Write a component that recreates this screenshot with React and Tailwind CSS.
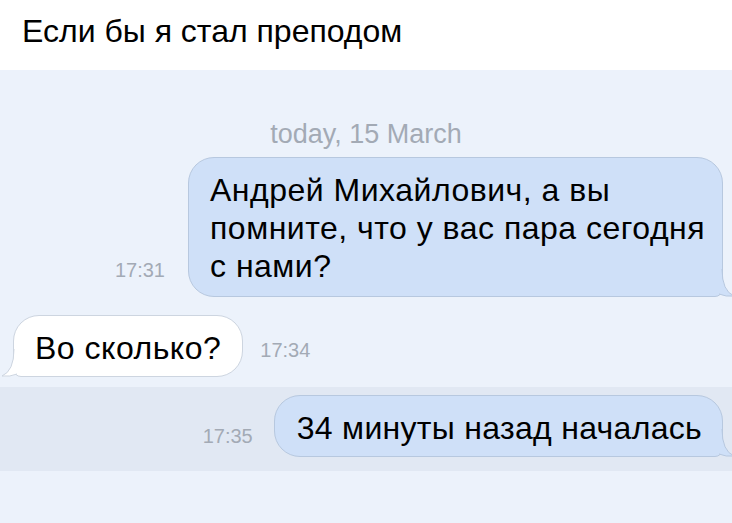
import React from "react";

const font = { fontFamily: '"Liberation Sans", Arial, sans-serif' };

// bubble tail, bottom-right (outgoing)
function TailRight() {
  return (
    <svg
      className="absolute right-[-13px] bottom-[-1px]"
      width="16"
      height="28"
      viewBox="0 0 16 28"
    >
      <path d="M0 0 L3 0 Q3 22 15 27 Q7 28 0 25 Z" fill="#cfe0f8" />
      <path d="M3 0 Q3 22 15 27 Q7 28 0 25" fill="none" stroke="#b7c8df" strokeWidth="1" />
    </svg>
  );
}

// bubble tail, bottom-left (incoming)
function TailLeft() {
  return (
    <svg
      className="absolute left-[-13px] bottom-[-1px]"
      width="16"
      height="28"
      viewBox="0 0 16 28"
    >
      <path d="M16 0 L13 0 Q13 22 1 27 Q9 28 16 25 Z" fill="#ffffff" />
      <path d="M13 0 Q13 22 1 27 Q9 28 16 25" fill="none" stroke="#cdd5e0" strokeWidth="1" />
    </svg>
  );
}

export default function App() {
  return (
    <div className="w-[732px] h-[523px] flex flex-col overflow-hidden" style={font}>
      {/* header */}
      <div className="h-[70px] bg-white pl-[22px] pt-[15px] shrink-0">
        <h1 className="text-[32px] text-black leading-none">
          Если бы я стал преподом
        </h1>
      </div>

      {/* chat */}
      <div className="flex-1 bg-[#ecf2fb] flex flex-col">
        <div className="text-center text-[27px] text-[#a3aab5] mt-[50px] leading-[28px]">
          today, 15 March
        </div>

        {/* msg 1 */}
        <div className="flex justify-end items-end pr-[9px] mt-[9px]">
          <span className="text-[20px] leading-[20px] text-[#a3aab5] mr-[23px] mb-[17px]">17:31</span>
          <div className="relative w-[535px] h-[140px] bg-[#cfe0f8] border border-[#b7c8df] rounded-[26px] rounded-br-[8px] pl-[21px] pr-[10px] pt-[13px] text-[32px] leading-[38px] tracking-[0.5px] text-black">
            Андрей Михайлович, а вы помните, что у вас пара сегодня с нами?
            <TailRight />
          </div>
        </div>

        {/* msg 2 */}
        <div className="flex items-center pl-[13px] mt-[18px]">
          <div className="relative h-[62px] bg-white border border-[#cdd5e0] rounded-[26px] rounded-bl-[8px] px-[21px] pt-[3px] flex items-center text-[32px] tracking-[0.5px] text-black">
            Во сколько?
            <TailLeft />
          </div>
          <span className="text-[20px] text-[#a3aab5] ml-[17px] mt-[8px]">17:34</span>
        </div>

        {/* msg 3, highlighted */}
        <div className="mt-[10px] h-[84px] bg-[#e1e8f3] flex items-start justify-end pr-[9px] pt-[8px]">
          <span className="text-[20px] text-[#a3aab5] mr-[21px] mt-[26px]">17:35</span>
          <div className="relative h-[62px] bg-[#cfe0f8] border border-[#b7c8df] rounded-[26px] rounded-br-[8px] pl-[22px] pr-[20px] pt-[3px] flex items-center text-[32px] tracking-[0.3px] text-black">
            34 минуты назад началась
            <TailRight />
          </div>
        </div>
      </div>
    </div>
  );
}
